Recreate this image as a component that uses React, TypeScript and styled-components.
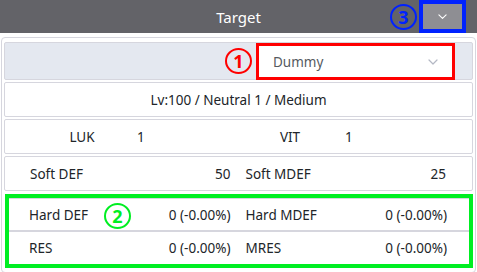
import React from "react";
import styled, { createGlobalStyle } from "styled-components";

const Global = createGlobalStyle`
  html, body { margin: 0; padding: 0; background: #ffffff; }
  body { font-family: "Noto Sans", "Open Sans", sans-serif; color: #212529; }
  * { box-sizing: border-box; }
`;

const Page = styled.div`
  width: 477px;
  height: 272px;
  overflow: hidden;
`;

const Header = styled.div`
  height: 33px;
  background: #636368;
  display: grid;
  grid-template-columns: 1fr auto 1fr;
  align-items: center;
  padding-right: 11px;
`;

const Title = styled.div`
  grid-column: 2;
  color: #ffffff;
  font-size: 15px;
  padding-left: 11px;
`;

const HeaderRight = styled.div`
  grid-column: 3;
  justify-self: end;
  display: flex;
  align-items: center;
  gap: 2px;
  height: 100%;
`;

const Mark = styled.span<{ $c: string }>`
  display: inline-flex;
  align-items: center;
  justify-content: center;
  width: 27px;
  height: 26px;
  border-radius: 50%;
  border: 2.8px solid ${(p) => p.$c};
  color: ${(p) => p.$c};
  font-weight: 700;
  font-size: 18px;
  line-height: 1;
  flex: none;
`;

const ToggleBtn = styled.button`
  width: 47px;
  height: 33px;
  border: 4px solid #0022ff;
  background: #8e8e93;
  display: flex;
  align-items: center;
  justify-content: center;
  padding: 0;
`;

const Panel = styled.div`
  margin: 4px 1px 0 1px;
  border: 1px solid #d6d6de;
  border-radius: 4px;
  padding: 4px 2px;
  display: flex;
  flex-direction: column;
  gap: 2px;
`;

const Row = styled.div<{ $bg?: string; $h?: number }>`
  height: ${(p) => p.$h ?? 35}px;
  border: 1px solid #d6d6de;
  border-radius: 2px;
  background: ${(p) => p.$bg ?? "#ffffff"};
  font-size: 13.5px;
`;

const SelectRow = styled(Row)`
  display: flex;
  align-items: center;
  justify-content: flex-end;
  gap: 4px;
  padding-right: 17px;
`;

const Select = styled.div`
  width: 199px;
  height: 37px;
  margin-top: 1px;
  border: 3px solid #ff0000;
  background: #ffffff;
  display: flex;
  align-items: center;
  justify-content: space-between;
  padding: 0 14px 0 14px;
  color: #555a60;
  font-size: 13.5px;
`;

const CenterRow = styled(Row)`
  display: flex;
  align-items: center;
  justify-content: center;
`;

const StatGrid = styled(Row)`
  display: grid;
  grid-template-columns: 104px 104px 104px 104px;
  align-items: center;
  padding-left: 25px;
`;

const StatLabel = styled.span`
  text-align: center;
`;

const StatValue = styled.span`
  padding-left: 3px;
`;

const PairRow = styled(Row)`
  display: grid;
  grid-template-columns: 1fr 1fr;
  column-gap: 15px;
  align-items: center;
  padding: 0 26px 0 25px;
`;

const Pair = styled.div`
  display: flex;
  justify-content: space-between;
`;

const GreenBox = styled.div`
  position: relative;
  margin: 1px 0 0 1px;
  border: 4px solid #00ee22;
  display: flex;
  flex-direction: column;
`;

const InnerPairRow = styled(PairRow)`
  border-radius: 0;
  border-left: none;
  border-right: none;
  height: 33px;
  padding: 0 22px 0 20px;
  &:first-child { border-top: none; height: 32px; }
  &:last-child { border-bottom: none; }
`;

const FloatMark = styled(Mark)`
  position: absolute;
  left: 95px;
  top: 5px;
`;

const Chevron = ({ color, size }: { color: string; size: number }) => (
  <svg width={size} height={size * 0.6} viewBox="0 0 10 6" fill="none">
    <path d="M1 1l4 4 4-4" stroke={color} strokeWidth="1.2" strokeLinecap="round" strokeLinejoin="round" />
  </svg>
);

export default function App() {
  return (
    <Page>
      <Global />
      <Header>
        <Title>Target</Title>
        <HeaderRight>
          <Mark $c="#0022ff">3</Mark>
          <ToggleBtn aria-label="toggle">
            <Chevron color="#ffffff" size={9} />
          </ToggleBtn>
        </HeaderRight>
      </Header>
      <Panel>
        <SelectRow $bg="#e4e8f0" $h={38}>
          <Mark $c="#ff0000">1</Mark>
          <Select>
            <span>Dummy</span>
            <Chevron color="#b4b8c4" size={10} />
          </Select>
        </SelectRow>
        <CenterRow>Lv:100 / Neutral 1 / Medium</CenterRow>
        <StatGrid>
          <StatLabel>LUK</StatLabel>
          <StatValue>1</StatValue>
          <StatLabel>VIT</StatLabel>
          <StatValue>1</StatValue>
        </StatGrid>
        <PairRow>
          <Pair><span>Soft DEF</span><span>50</span></Pair>
          <Pair><span>Soft MDEF</span><span>25</span></Pair>
        </PairRow>
        <GreenBox>
          <FloatMark $c="#00ee22">2</FloatMark>
          <InnerPairRow>
            <Pair><span>Hard DEF</span><span>0 (-0.00%)</span></Pair>
            <Pair><span>Hard MDEF</span><span>0 (-0.00%)</span></Pair>
          </InnerPairRow>
          <InnerPairRow>
            <Pair><span>RES</span><span>0 (-0.00%)</span></Pair>
            <Pair><span>MRES</span><span>0 (-0.00%)</span></Pair>
          </InnerPairRow>
        </GreenBox>
      </Panel>
    </Page>
  );
}
